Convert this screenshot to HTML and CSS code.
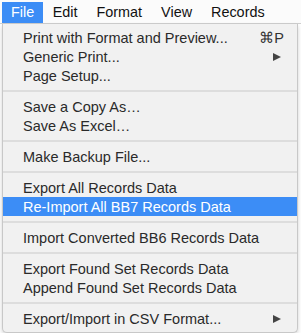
FILE: index.html
```html
<!DOCTYPE html>
<html>
<head>
<meta charset="utf-8">
<link rel="stylesheet" href="styles.css">
</head>
<body>
<div class="menubar">
  <span class="bar-item active">File</span>
  <span class="bar-item">Edit</span>
  <span class="bar-item">Format</span>
  <span class="bar-item">View</span>
  <span class="bar-item">Records</span>
</div>
<div class="menu">
  <div class="item"><span>Print with Format and Preview...</span><span class="key">⌘P</span></div>
  <div class="item"><span>Generic Print...</span><span class="arrow"></span></div>
  <div class="item"><span>Page Setup...</span></div>
  <div class="sep"></div>
  <div class="item"><span>Save a Copy As…</span></div>
  <div class="item"><span>Save As Excel…</span></div>
  <div class="sep"></div>
  <div class="item"><span>Make Backup File...</span></div>
  <div class="sep"></div>
  <div class="item"><span>Export All Records Data</span></div>
  <div class="item selected"><span>Re-Import All BB7 Records Data</span></div>
  <div class="sep"></div>
  <div class="item"><span>Import Converted BB6 Records Data</span></div>
  <div class="sep"></div>
  <div class="item"><span>Export Found Set Records Data</span></div>
  <div class="item"><span>Append Found Set Records Data</span></div>
  <div class="sep"></div>
  <div class="item"><span>Export/Import in CSV Format...</span><span class="arrow"></span></div>
</div>
</body>
</html>
```
FILE: styles.css
```css
* { box-sizing: border-box; }
html, body {
  margin: 0;
  padding: 0;
  background: #ffffff;
  font-family: "Liberation Sans", Arial, sans-serif;
  font-size: 14.5px;
  color: #222;
}
.menubar {
  display: flex;
  height: 24px;
  padding: 2px 0 0 2px;
  background: #fbfbfb;
  border-bottom: 1px solid #cfcfcf;
}
.bar-item {
  padding: 0 9.5px;
  line-height: 21px;
  height: 21px;
  color: #111;
  font-size: 14.4px;
}
.bar-item.active {
  background: #3c8df6;
  color: #fff;
  padding: 0 9px;
}
.menu {
  margin: 0 3px 0 2px;
  padding: 4px 0 4px;
  background: #f1f1f1;
  border: 1px solid #c8c8c8;
  border-top: none;
  border-radius: 0 0 5px 5px;
  box-shadow: 0 2px 4px rgba(0,0,0,0.18);
}
.item {
  display: flex;
  justify-content: space-between;
  align-items: center;
  height: 19px;
  padding: 0 13px 0 20px;
  color: #2a2a2a;
}
.item.selected {
  background: #3c8df6;
  color: #fff;
}
.key {
  color: #333;
}
.arrow {
  width: 0;
  height: 0;
  border-top: 4.5px solid transparent;
  border-bottom: 4.5px solid transparent;
  border-left: 8px solid #444;
  margin-right: 3px;
}
.sep {
  height: 12px;
  display: flex;
  align-items: center;
}
.sep::before {
  content: "";
  display: block;
  width: 100%;
  height: 2px;
  background: #dddddd;
}
```
